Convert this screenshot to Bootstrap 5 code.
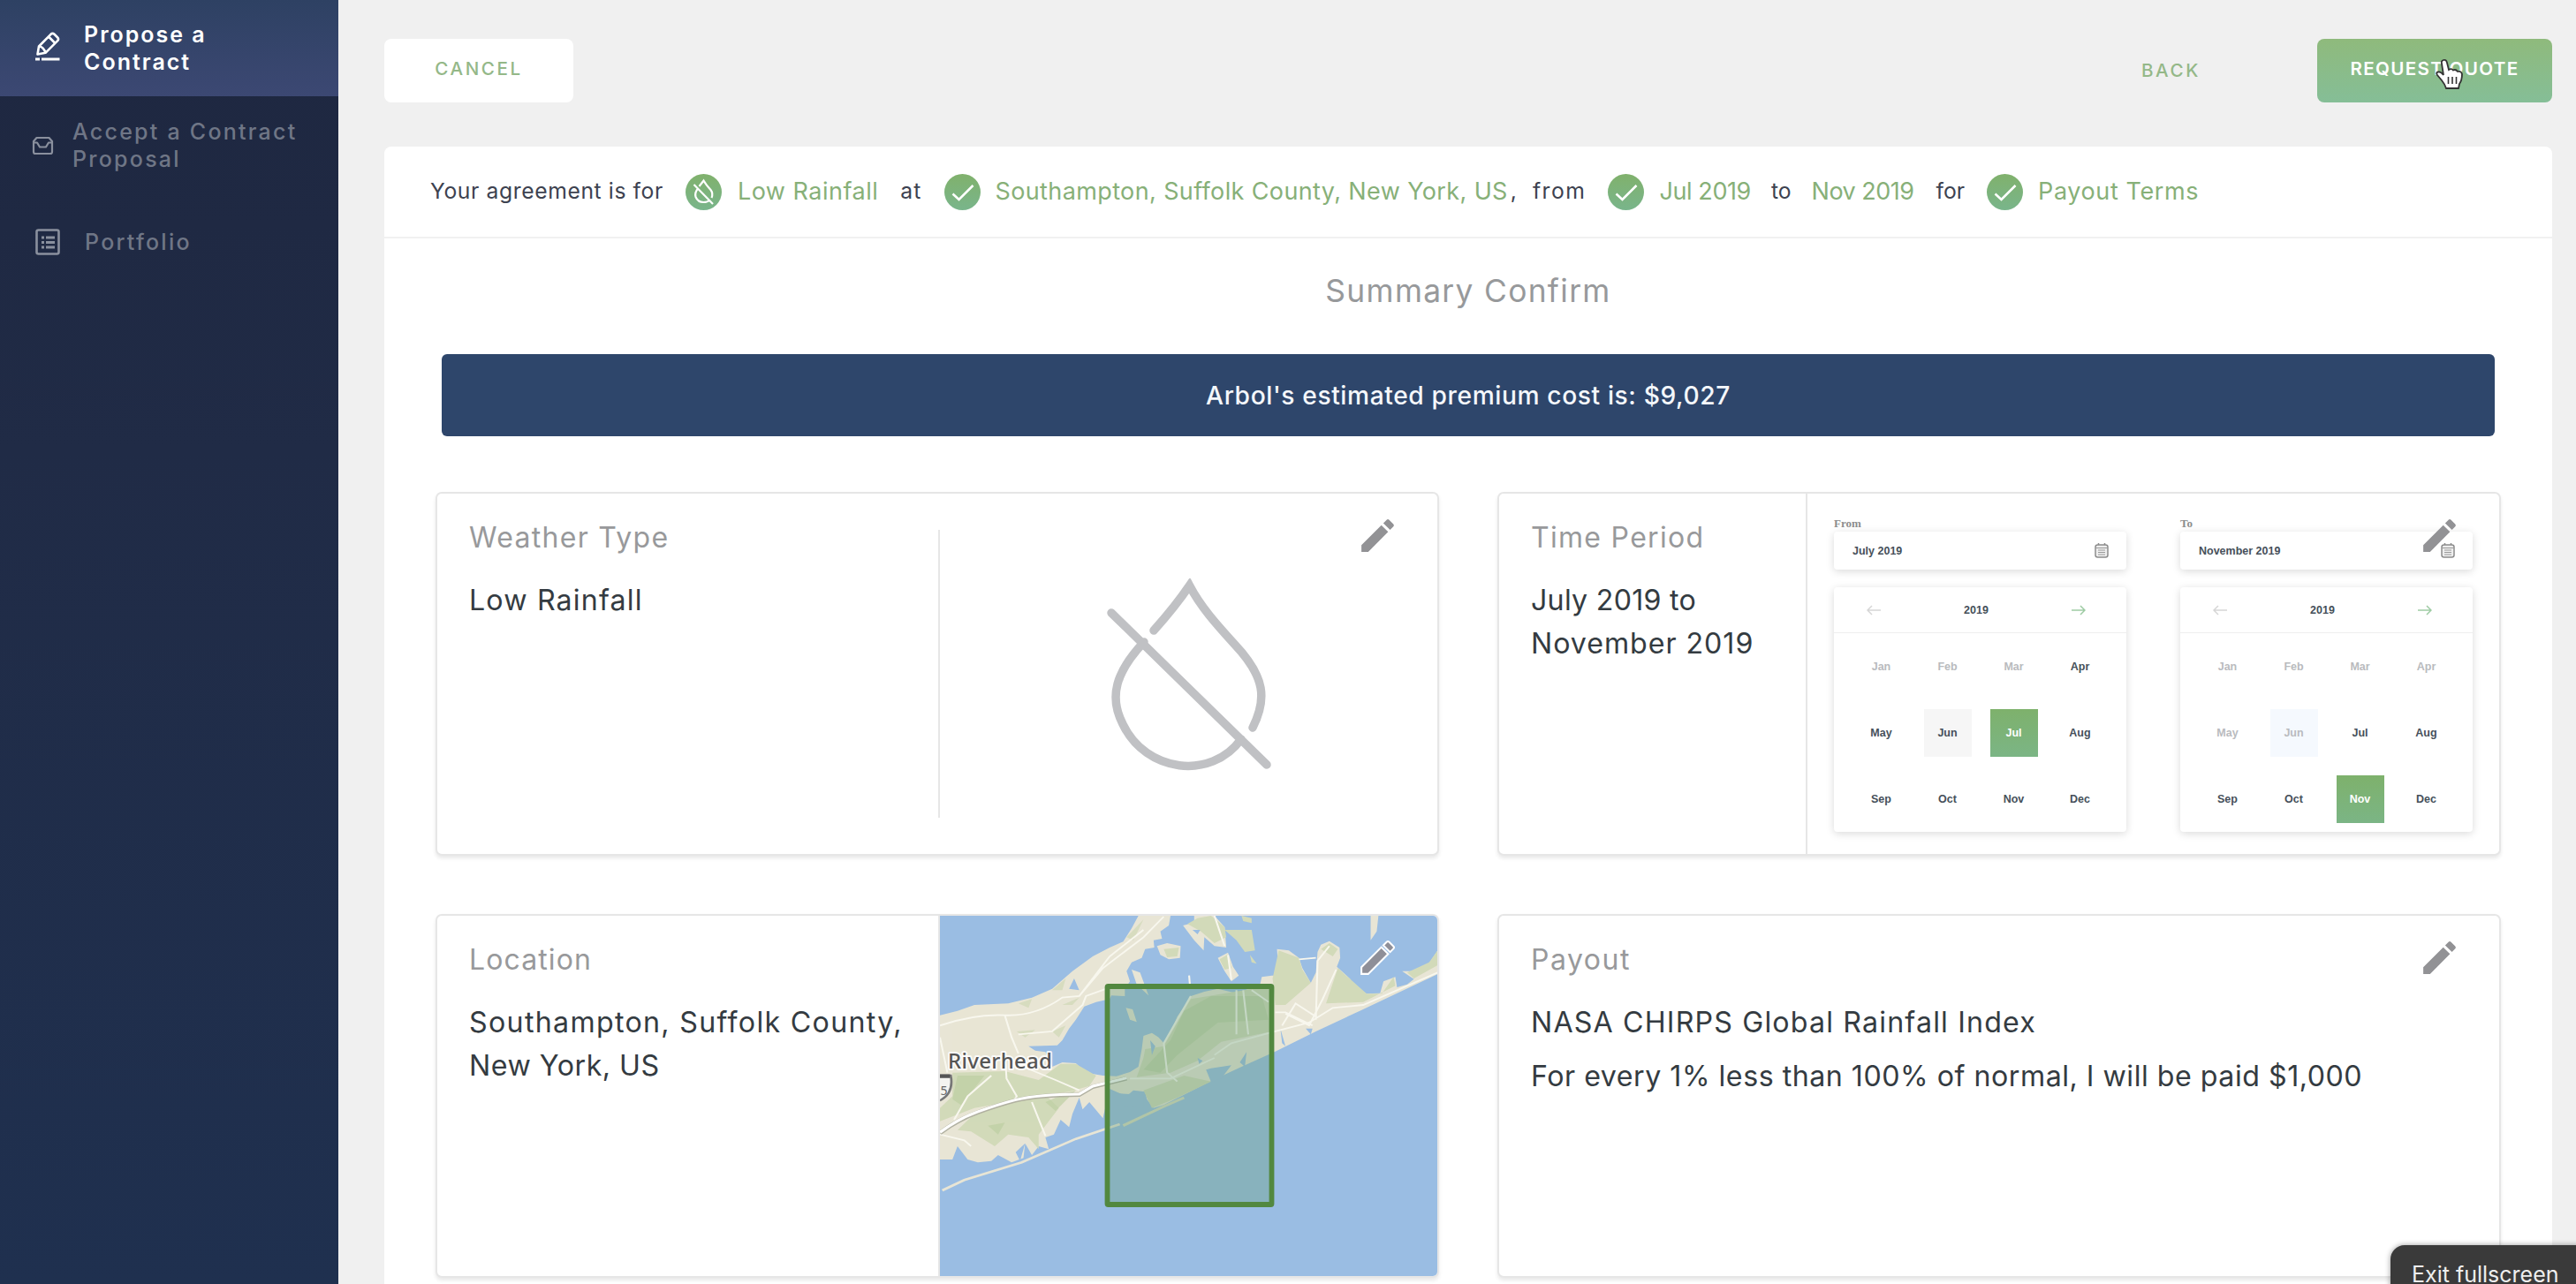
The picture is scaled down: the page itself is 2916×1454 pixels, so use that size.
<!DOCTYPE html>
<html lang="en">
<head>
<meta charset="utf-8">
<title>Propose a Contract</title>
<link href="https://cdn.jsdelivr.net/npm/bootstrap@5.3.0/dist/css/bootstrap.min.css" rel="stylesheet">
<style>
body{font-family:Inter,"Open Sans",sans-serif;background:#f0f0f0;color:#343b41;width:2916px;height:1454px;overflow:hidden}
.t{white-space:nowrap;display:inline-block}
/* tracking steps */
.k-n4{letter-spacing:-.5px}.k-n3{letter-spacing:-.4px}.k-2{letter-spacing:.25px}.k-4{letter-spacing:.38px}.k-5{letter-spacing:.5px}.k-6{letter-spacing:.6px}.k-8{letter-spacing:.95px}.k-10{letter-spacing:1.1px}.k-11{letter-spacing:1.15px}.k-12{letter-spacing:1.3px}.k-14{letter-spacing:1.5px}.k-18{letter-spacing:2px}.k-21{letter-spacing:2.25px}.k-24{letter-spacing:2.6px}
.side{width:383px;background:linear-gradient(#1e2740,#202b46 35%,#1f304f);flex:none}
.side-item{height:110px;font-size:25px;line-height:31px;font-weight:500;color:#6f7686;padding:1px 0 0 40px}
.side-item.narrow{padding-left:36px}
.side-item svg{margin-right:27px}
.side-item.narrow svg{margin-right:21px}
.side-item.on{height:109px;color:#fff;font-weight:600;background:linear-gradient(#2e4163,#3c4873)}
.side-item.on svg{margin:-4px 25px 0 0}
.main{padding:44px 27px 0 52px}
.btn-x{height:72px;border-radius:8px;font-size:20.6px;font-weight:500;color:#94b888;display:flex;align-items:center;justify-content:center}
.b-cancel{width:214px;background:#fff;padding-bottom:4px}
.b-req{width:266px;color:#fff;background:linear-gradient(#8fba7c,#85be97);font-weight:600;padding-bottom:3px;position:relative}
.b-back{margin-right:132px}
.hand{position:absolute;left:133px;top:22px}
.panel{margin-top:50px;height:1300px;background:#fff;border-radius:8px 8px 0 0}
.agree{height:104px;border-bottom:2px solid #f1f1f1;padding:0 0 0 52px;font-size:24.7px;color:#3d4250;gap:25px}
.agree .g{font-size:27px;color:#87b078}
.agree .pair{display:flex;align-items:center;gap:18px}
.agree .comma{margin:0 -7px 0 -22px}
.agree .tight{gap:17px}
.agree .nudge{margin-left:-2px}
.ttl{font-size:35.4px;line-height:50px;color:#97999b;padding:35px 0 46px}
.banner{height:93px;margin:0 65px;background:#2e466b;border-radius:6px;font-size:28.2px;font-weight:500;color:#f4f7fb;padding-top:2px}
.cards{display:grid;grid-template-columns:1fr 1fr;gap:66px;padding:63px 58px 0}
.box{height:412px;border:2px solid #e6e6e6;border-radius:7px;box-shadow:0 3px 4px rgba(0,0,0,.09);position:relative;background:#fff;overflow:hidden}
.box .l{padding:25px 0 0 36px;font-size:32.2px;line-height:49px;flex:none}
.box .half{width:567px}
.box .third{width:347px}
.box h3{font-size:32px;line-height:49px;font-weight:400;color:#98999b;margin:0 0 22px}
.box p{margin:0 0 12px}
.pen{position:absolute;right:43px;top:23px}
.vr-in,.vr-full{width:2px;background:#e6e6e6;flex:none}
.vr-in{margin:41px 0}
.vr-cal{margin-right:30px}
.dropico{margin:96px 0 0 189px}
.cal{width:331px;padding-top:26px;margin-right:61px;flex:none;font:bold 12.5px "Liberation Sans",sans-serif;color:#46505a}
.cal .cap{font:bold 13px/16px "Liberation Serif",serif;color:#8d8d8d;height:17px}
.inp,.mon{background:#fff;border-radius:4px;box-shadow:0 2px 10px rgba(0,0,0,.15)}
.inp{height:43px;padding:0 20px 0 21px;margin-bottom:20px}
.mon{height:277px}
.hd{height:52px;border-bottom:1px solid #eee;padding:0 46px 0 37px}
.gr{display:grid;grid-template-columns:repeat(4,75px);grid-auto-rows:75px;padding-left:16px}
.gr span{width:54px;height:54px;place-self:center;display:flex;align-items:center;justify-content:center}
.gr .off{color:#b9bbbe}.gr .sel{background:linear-gradient(#7eb16c,#7bb585);color:#fff}.gr .hov{background:#f6f6f6}.gr .hov2{background:#f5f9fe;color:#b9bbbe}
.tip{position:absolute;left:2706px;top:1410px;width:240px;height:80px;background:#3a3a3a;border-radius:16px;color:#eee;font-size:25px;line-height:30px;padding:18px 0 0 24px;box-shadow:0 0 6px rgba(0,0,0,.4)}
</style>
<script src="https://cdn.jsdelivr.net/npm/bootstrap@5.3.0/dist/js/bootstrap.bundle.min.js"></script>
</head>
<body class="position-relative">
<svg width="0" height="0" class="position-absolute">
 <defs>
  <linearGradient id="gg" x1="0" y1="0" x2="0" y2="1"><stop offset="0" stop-color="#80b16c"/><stop offset="1" stop-color="#79b58b"/></linearGradient>
  <symbol id="pencil" viewBox="0 0 24 24"><path d="M3 17.250V21h3.750L17.810 9.940l-3.750-3.750L3 17.250zM20.710 7.040a1 1 0 0 0 0-1.410l-2.340-2.340a1 1 0 0 0-1.410 0l-1.830 1.830 3.750 3.750 1.830-1.830z"/></symbol>
  <symbol id="check" viewBox="0 0 41 41"><circle cx="20.500" cy="20.500" r="20.500" fill="url(#gg)"/><path d="M9.500 22.500L16.500 29 32.500 13" fill="none" stroke="#fff" stroke-width="2.600"/></symbol>
  <symbol id="calic" viewBox="0 0 16 17"><path d="M4.500 0V3M11.500 0V3" stroke="#8c8c8c" stroke-width="1.500"/><rect x="1" y="2" width="14" height="14" rx="2.500" fill="#eee" stroke="#8c8c8c" stroke-width="1.500"/><path d="M1 5.500H15M4 8H12M4 10.500H12M4 13H12" stroke="#999" stroke-width="1"/></symbol>
 </defs>
</svg>
<div class="d-flex h-100">
<nav class="side">
 <div class="side-item on d-flex align-items-center"><svg width="30" height="34" viewBox="0 0 30 34" fill="none" stroke="#fff" stroke-width="2.600" stroke-linejoin="round"><path d="M2.500 25.500L4 16.500 17.500 2.800Q19.500 1 21.500 2.800L25 6.200Q27 8.200 25.200 10.200L11.500 23.800ZM15 5.500L22.500 13M4.500 16.500Q9 17 11.500 23.500"/><path d="M0 31H5M7 31H27.500" stroke-width="3"/></svg><div><span class="t k-18">Propose a</span><br><span class="t k-18">Contract</span></div></div>
 <div class="side-item narrow d-flex align-items-center"><svg width="25" height="22" viewBox="0 0 25 22" fill="none" stroke="#8a909e" stroke-width="2.200" stroke-linejoin="round"><path d="M2 6V18Q2 20 4 20H21Q23 20 23 18V6L19.500 2H5.500ZM2 7.500H6L9 12.500H16L19 7.500H23"/></svg><div><span class="t k-21">Accept a Contract</span><br><span class="t k-21">Proposal</span></div></div>
 <div class="side-item d-flex align-items-center"><svg width="29" height="31" viewBox="0 0 29 31" fill="none" stroke="#8a909e" stroke-width="2.600"><rect x="1.500" y="1.500" width="25" height="27" rx="2"/><path d="M7 10H10M12 10H22M7 15.500H10M12 15.500H22M7 21H10M12 21H22" stroke-width="2.800"/></svg><span class="t k-21">Portfolio</span></div>
</nav>
<div class="main flex-grow-1">
 <div class="d-flex">
  <div class="btn-x b-cancel me-auto"><span class="t k-24">CANCEL</span></div>
  <div class="btn-x b-back"><span class="t k-24">BACK</span></div>
  <div class="btn-x b-req"><span class="t k-12">REQUEST QUOTE</span>
   <svg class="hand" width="34" height="38" viewBox="0 0 34 38"><path d="M10 2Q13 1 14 5L16 13Q19 11 21 13.500 24 12 26 15 30 14 31 18 31 25 28 29L27 34H13Q12 30 8 25L3 19Q1 16 4 15.500 7 15 10 19L8 6Q7 3 10 2Z" fill="#fff" stroke="#333" stroke-width="1.800"/><path d="M15.500 21V29M20 21V29M24.500 21V29" stroke="#333" stroke-width="1.600"/></svg>
  </div>
 </div>
 <div class="panel">
  <div class="agree d-flex align-items-center">
   <span class="t k-6">Your agreement is for</span>
   <div class="pair"><svg width="41" height="41" viewBox="0 0 41 41"><circle cx="20.500" cy="20.500" r="20.500" fill="url(#gg)"/><path d="M15.500 14L20.500 7.500Q23 12 28.500 18 31.500 22 29.500 27M14.500 16Q10 21 11.500 26 14 32 20.500 32 25 32 27.500 29.500M9.500 12L31 34" fill="none" stroke="#fff" stroke-width="2.200"/></svg><span class="t g k-5">Low Rainfall</span></div>
   <span class="t k-11">at</span>
   <div class="pair tight"><svg width="41" height="41"><use href="#check"/></svg><span class="t g k-4">Southampton, Suffolk County, New York, US</span></div>
   <span class="t comma">,</span>
   <span class="t k-14">from</span>
   <div class="pair tight"><svg width="41" height="41"><use href="#check"/></svg><span class="t g k-n3">Jul 2019</span></div>
   <span class="t nudge">to</span>
   <span class="t g k-n4 nudge">Nov 2019</span>
   <span class="t">for</span>
   <div class="pair tight"><svg width="41" height="41"><use href="#check"/></svg><span class="t g k-6">Payout Terms</span></div>
  </div>
  <div class="ttl text-center"><span class="t k-12">Summary Confirm</span></div>
  <div class="banner d-flex align-items-center justify-content-center"><span class="t k-6">Arbol's estimated premium cost is: $9,027</span></div>
  <div class="cards">
   <div class="box d-flex">
    <div class="l half"><h3><span class="t k-12">Weather Type</span></h3><span class="t k-11">Low Rainfall</span></div>
    <div class="vr-in"></div>
    <svg class="dropico" width="190" height="220" viewBox="0 0 190 220" fill="none" stroke="#c0c1c4" stroke-width="9.500" stroke-linecap="round"><path d="M53 59C70 40 82 25 93.500 8C106 32 124 52 144 74C180 112 181 137 165 169M42 72C10 106 2 134 18 165C44 220 118 229 152 182M5 39L181 211"/></svg>
    <svg class="pen" width="49" height="49" fill="#929295"><use href="#pencil"/></svg>
   </div>
   <div class="box d-flex">
    <div class="l third"><h3><span class="t k-12">Time Period</span></h3><span class="t k-2">July 2019 to</span><br><span class="t k-8">November 2019</span></div>
    <div class="vr-full vr-cal"></div>
    <div class="cal"><div class="cap">From</div>
     <div class="inp d-flex align-items-center justify-content-between"><span>July 2019</span><svg width="16" height="17"><use href="#calic"/></svg></div>
     <div class="mon"><div class="hd d-flex align-items-center justify-content-between"><svg width="16" height="12" fill="none" stroke="#d6d6d6" stroke-width="1.500"><path d="M16 6H1M6 1L1 6 6 11"/></svg><span>2019</span><svg width="16" height="12" fill="none" stroke="#9ecba4" stroke-width="1.500"><path d="M0 6H15M10 1L15 6 10 11"/></svg></div>
      <div class="gr"><span class="off">Jan</span><span class="off">Feb</span><span class="off">Mar</span><span>Apr</span><span>May</span><span class="hov">Jun</span><span class="sel">Jul</span><span>Aug</span><span>Sep</span><span>Oct</span><span>Nov</span><span>Dec</span></div></div>
    </div>
    <div class="cal"><div class="cap">To</div>
     <div class="inp d-flex align-items-center justify-content-between"><span>November 2019</span><svg width="16" height="17"><use href="#calic"/></svg></div>
     <div class="mon"><div class="hd d-flex align-items-center justify-content-between"><svg width="16" height="12" fill="none" stroke="#d6d6d6" stroke-width="1.500"><path d="M16 6H1M6 1L1 6 6 11"/></svg><span>2019</span><svg width="16" height="12" fill="none" stroke="#9ecba4" stroke-width="1.500"><path d="M0 6H15M10 1L15 6 10 11"/></svg></div>
      <div class="gr"><span class="off">Jan</span><span class="off">Feb</span><span class="off">Mar</span><span class="off">Apr</span><span class="off">May</span><span class="hov2">Jun</span><span>Jul</span><span>Aug</span><span>Sep</span><span>Oct</span><span class="sel">Nov</span><span>Dec</span></div></div>
    </div>
    <svg class="pen" width="49" height="49" fill="#929295"><use href="#pencil"/></svg>
   </div>
   <div class="box d-flex">
    <div class="l half"><h3><span class="t k-10">Location</span></h3><span class="t k-12">Southampton, Suffolk County,</span><br><span class="t k-5">New York, US</span></div>
    <div class="vr-full"></div>
    <svg class="flex-shrink-0" width="564" height="410" viewBox="0 0 564 410">
     <rect width="564" height="410" fill="#9abde3"/>
     <g transform="scale(.3827 .3333) translate(-38 -47)">
      <g fill="#e8e5d5">
       <path d="M38 385L90 370 140 350 240 345 310 325 370 295 430 235 490 185 540 155 580 135 605 90 625 47H720L715 80 690 100 695 125 670 130 672 155 645 160 635 190 605 205 590 235 600 270 585 295 585 320 545 318 540 330 500 340 465 355 440 400 420 430 400 470 385 487 300 490 320 505 350 510 370 560 400 545 440 548 470 580 520 590 560 592 600 578 625 560 635 500 640 455 665 445 685 460 700 470 725 430 740 390 770 340 780 320 820 305 860 295 915 310 985 280 990 255 1020 250 1040 250 1035 160 1070 165 1100 190 1110 225 1135 275 1150 240 1155 170 1165 145 1190 133 1220 155 1222 190 1212 220 1250 260 1270 290 1300 312 1340 310 1350 270 1385 255 1390 290 1420 280 1440 262 1405 235 1460 235 1490 200 1510 165V245L1400 305 1280 370 1150 440 1030 508 930 560 850 603 700 690 670 700 650 670 645 645 610 640 590 660 540 635 520 735 480 680 460 705 450 665 430 720 420 765 395 740 375 790 350 800 360 840 330 830 310 860 290 820 285 870 250 885 210 860 190 880 150 885 120 875 90 830 75 875 38 875Z"/>
       <path d="M680 150L710 140 750 150 748 190 715 195 690 180ZM757 80L790 70 790 47H850L880 85 885 155 850 150 820 120 818 165 790 130ZM860 190L890 172 905 220 922 250 900 270 880 235ZM1312 47H1335L1330 100 1312 130ZM588 360L608 365 620 408 600 400ZM605 230L630 240 655 318 620 280Z"/>
      </g>
      <g fill="#d2dab9">
       <path d="M770 75L800 55 840 47 880 85 885 120 850 140 810 100ZM880 95L960 95 970 165 940 170 915 130ZM955 180L975 210 960 205ZM930 47L960 55 960 72 935 65ZM865 195L890 178 900 225 880 230ZM1040 165L1100 190 1110 230 1135 275 1060 350 1030 350 1022 260ZM1215 225L1300 312 1345 312 1380 255 1385 285 1290 340 1180 345ZM1420 240L1485 205 1510 165V215L1440 260ZM700 160L745 155 740 185 710 188ZM1165 160L1190 140 1215 160 1200 185Z"/>
       <path d="M75 580L230 575 330 605 395 550 440 550 500 590 480 625 420 645 350 655 390 700 330 790 330 840 300 800 240 790 200 830 130 780 90 775 140 720 240 680 140 700 38 745V700L75 660ZM645 500L700 490 780 330 990 290 1020 300 1020 440 870 475 800 540 720 580 620 595 640 530ZM640 640L760 590 840 610 740 665 665 700Z"/>
       <path d="M270 345L310 330 300 360ZM370 300L410 260 400 300ZM400 350L450 325 430 350ZM265 440L320 435 290 460ZM370 440L410 420 390 460ZM590 120L640 60 610 130Z" opacity=".8"/>
      </g>
      <g fill="#bccea0" opacity=".65"><path d="M720 470L760 370 840 320 990 320 1010 400 860 410 740 520 690 580 640 570ZM90 590L170 590 100 690 75 670Z"/><path d="M410 650L440 640 380 710 350 680ZM180 760L230 750 210 790Z"/></g>
      <g fill="#9abde3"><path d="M700 430L720 440 700 480 685 460ZM660 470L675 490 665 520ZM800 530L815 540 805 550ZM840 565L900 555 870 600 840 612 825 570ZM925 545L945 510 940 560ZM435 260L450 300 420 295ZM1045 430L1060 490 1050 480ZM1120 430H1140L1135 450ZM290 820L275 880 262 850ZM640 700L560 690 545 650 640 655ZM785 95L808 95 800 110Z"/></g>
      <g fill="none" stroke="#f8f7ee" stroke-width="5.500">
       <path d="M45 980L110 945 280 885 440 805 570 755" stroke="#e8e5d5" stroke-width="8"/><path d="M580 760L700 695 760 665" stroke="#d9dcc0" stroke-width="9"/>
       <path d="M38 420Q140 380 230 385T400 325L450 320 520 225 640 120 700 50M640 95L540 185 450 320M230 385L250 460 270 515M38 460L60 580M270 450L370 440 460 350 470 320 530 295M230 510L235 600 265 660 255 680M190 590L120 660 80 740M285 560L380 605 450 640M310 680L350 795M38 790L110 810 130 830M850 47L880 150M890 180L900 265M775 250L778 290"/>
       <path d="M780 320L700 480 710 580 740 610M850 520L900 480 1030 440 1130 410 1200 360 1290 350 1510 240M915 300V450M935 300L950 450M960 300L1010 340M1150 400L1155 200 1190 150M1150 390L1090 345 1050 420M1060 380L1130 420 1170 330 1210 230M1100 195L1150 190M600 600L720 600 850 530M1030 375H1060L1140 420"/>
      </g>
      <path d="M38 785Q90 740 150 715T260 675Q330 655 450 655L490 628 590 600" fill="none" stroke="#b0b0a0" stroke-width="14"/><path d="M38 783Q90 738 150 713T260 673Q330 653 450 653L490 626 590 598" fill="none" stroke="#fff" stroke-width="9"/>
      <path d="M38 590H70Q80 650 38 675" fill="#f4f4f0" stroke="#777" stroke-width="7"/><path d="M38 592H68" stroke="#555" stroke-width="13"/>
     </g>
     <text x="0.500" y="203" font-size="14" font-family="Noto Sans" fill="#666">5</text>
     <text x="9" y="173" font-size="24" font-weight="500" font-family="Noto Sans,Open Sans,sans-serif" fill="#555" stroke="#fff" stroke-width="4" stroke-opacity=".85" stroke-linejoin="round" paint-order="stroke" textLength="118">Riverhead</text>
     <rect x="189.500" y="80" width="186" height="247" rx="1" fill="#6a9f7a" fill-opacity=".36" stroke="#52883f" stroke-width="5.800"/>
    </svg>
    <svg class="pen" width="49" height="49" fill="#8f8f98" stroke="#fff" stroke-width="1"><use href="#pencil"/></svg>
   </div>
   <div class="box">
    <div class="l"><h3><span class="t k-14">Payout</span></h3><p><span class="t k-11">NASA CHIRPS Global Rainfall Index</span></p><span class="t k-5">For every 1% less than 100% of normal, I will be paid $1,000</span></div>
    <svg class="pen" width="49" height="49" fill="#929295"><use href="#pencil"/></svg>
   </div>
  </div>
 </div>
</div>
</div>
<div class="tip"><span class="t">Exit fullscreen</span></div>
</body></html>
